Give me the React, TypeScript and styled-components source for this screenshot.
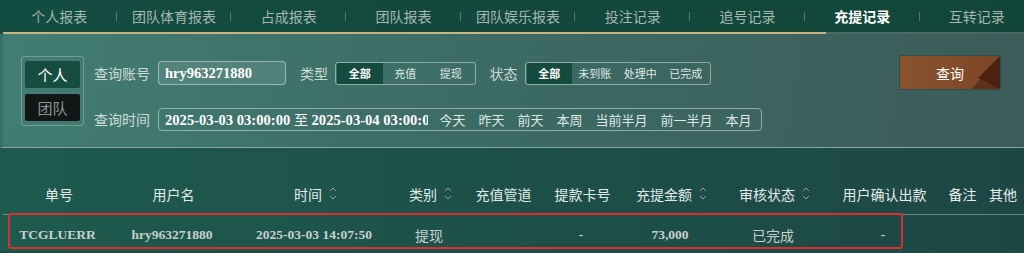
import React from "react";
import styled, { createGlobalStyle } from "styled-components";

const GlobalStyle = createGlobalStyle`
  body {
    margin: 0;
    background: #1d4d46;
    font-family: "Noto Sans CJK SC", "Noto Sans", sans-serif;
  }
`;

const tabs = [
  "个人报表",
  "团队体育报表",
  "占成报表",
  "团队报表",
  "团队娱乐报表",
  "投注记录",
  "追号记录",
  "充提记录",
  "互转记录",
];

const columns = [
  { title: "单号", width: 115 },
  { title: "用户名", width: 114 },
  { title: "时间", width: 170, sort: true },
  { title: "类别", width: 60, sort: true },
  { title: "充值管道", width: 86 },
  { title: "提款卡号", width: 72 },
  { title: "充提金额", width: 106, sort: true },
  { title: "审核状态", width: 100, sort: true },
  { title: "用户确认出款", width: 120 },
  { title: "备注", width: 36 },
  { title: "其他", width: 45 },
];

// cjk: true for cells in Chinese, shown in regular weight
const row = [
  { v: "TCGLUERR" },
  { v: "hry963271880" },
  { v: "2025-03-03 14:07:50" },
  { v: "提现", cjk: true },
  { v: "" },
  { v: "-" },
  { v: "73,000" },
  { v: "已完成", cjk: true },
  { v: "-" },
  { v: "" },
  { v: "" },
];

const gridCols = columns.map((c) => `${c.width}px`).join(" ");

const SortIcon = () => (
  <svg width="8" height="15" viewBox="0 0 8 15" fill="none">
    <path d="M1 5 L4 2 L7 5" stroke="#8fa59f" strokeWidth="1" />
    <path d="M1 10 L4 13 L7 10" stroke="#8fa59f" strokeWidth="1" />
  </svg>
);

export default function App() {
  return (
    <Page>
      <GlobalStyle />
      <Nav>
        {tabs.map((t, i) => (
          <Tab key={t} active={t === "充提记录"} last={i === tabs.length - 1}>
            {t}
          </Tab>
        ))}
      </Nav>
      <NavLine />

      <Panel>
        <ToggleBox>
          <ToggleBtn active>个人</ToggleBtn>
          <ToggleBtn>团队</ToggleBtn>
        </ToggleBox>

        <Form>
          <FormRow>
            <Label>查询账号</Label>
            <TextBox>hry963271880</TextBox>
            <Label spaced>类型</Label>
            <Segment>
              <SegItem active>全部</SegItem>
              <SegItem>充值</SegItem>
              <SegItem>提现</SegItem>
            </Segment>
            <Label spaced>状态</Label>
            <Segment>
              <SegItem active>全部</SegItem>
              <SegItem>未到账</SegItem>
              <SegItem>处理中</SegItem>
              <SegItem>已完成</SegItem>
            </Segment>
          </FormRow>
          <FormRow>
            <Label>查询时间</Label>
            <DateBox>
              <DateText>
                2025-03-03 03:00:00 <To>至</To> 2025-03-04 03:00:00
              </DateText>
              {["今天", "昨天", "前天", "本周", "当前半月", "前一半月", "本月"].map(
                (q) => (
                  <Quick key={q}>{q}</Quick>
                )
              )}
            </DateBox>
          </FormRow>
        </Form>

        <SearchButton>
          <Corner viewBox="0 0 100 33" preserveAspectRatio="none">
            <polygon points="100,0 100,33 72,33" fill="#5e3118" />
            <polygon points="100,0 100,33 78,22" fill="#4a220d" />
          </Corner>
          <span>查询</span>
        </SearchButton>
      </Panel>

      <TableArea>
        <HeaderRow>
          {columns.map((c) => (
            <HeadCell key={c.title}>
              {c.title}
              {c.sort && <SortIcon />}
            </HeadCell>
          ))}
        </HeaderRow>
        <DataRow>
          {row.map((c, i) => (
            <DataCell key={i} cjk={c.cjk}>
              {c.v}
            </DataCell>
          ))}
        </DataRow>
        <Highlight />
      </TableArea>
    </Page>
  );
}

const Page = styled.div`
  width: 1024px;
  height: 253px;
  overflow: hidden;
  background: #1d4d46;
`;

const Nav = styled.div`
  display: grid;
  grid-template-columns: repeat(9, 114.7px);
  height: 32px;
  padding-left: 2px;
  background: linear-gradient(90deg, #134c40, #124638);
  overflow: hidden;
`;

const Tab = styled.div<{ active?: boolean; last?: boolean }>`
  position: relative;
  display: flex;
  align-items: center;
  justify-content: center;
  font-size: 14px;
  color: ${(p) => (p.active ? "#ffffff" : "#a4b8b1")};
  font-weight: ${(p) => (p.active ? 700 : 400)};

  &::after {
    content: "";
    display: ${(p) => (p.last ? "none" : "block")};
    position: absolute;
    right: 0;
    top: 12px;
    width: 1px;
    height: 9px;
    background: rgba(200, 215, 210, 0.35);
  }
`;

const NavLine = styled.div`
  height: 2px;
  margin-left: 3px;
  background: linear-gradient(90deg, #c8b47c 0 823px, #4b6a63 823px);
`;

const Panel = styled.div`
  display: flex;
  align-items: flex-start;
  height: 114px;
  box-sizing: border-box;
  padding: 22px 24px 0 18px;
  background: linear-gradient(100deg, #427d73 0%, #3c6a64 50%, #3c5c5a 100%);
  border-left: 3px solid #3a6d66;
  border-bottom: 1px solid #8aa6a0;
`;

const ToggleBox = styled.div`
  display: flex;
  flex-direction: column;
  gap: 6px;
  width: 63px;
  height: 70px;
  box-sizing: border-box;
  padding: 4px 3px;
  border: 1px solid rgba(200, 225, 218, 0.35);
  border-radius: 3px;
`;

const ToggleBtn = styled.div<{ active?: boolean }>`
  display: flex;
  align-items: center;
  justify-content: center;
  height: 28px;
  border-radius: 2px;
  font-size: 15px;
  background: ${(p) => (p.active ? "#174c40" : "#121616")};
  color: ${(p) => (p.active ? "#ffffff" : "#8a9592")};
`;

const Form = styled.div`
  display: flex;
  flex-direction: column;
  gap: 22px;
  margin-left: 10px;
  padding-top: 5px;
`;

const FormRow = styled.div`
  display: flex;
  align-items: center;
  height: 24px;
`;

const Label = styled.span<{ spaced?: boolean }>`
  font-size: 14px;
  color: #cddbd6;
  margin-left: ${(p) => (p.spaced ? "14px" : "0")};
  margin-right: ${(p) => (p.spaced ? "7px" : "8px")};
  white-space: nowrap;
`;

const TextBox = styled.div`
  width: 128px;
  height: 24px;
  box-sizing: border-box;
  padding: 0 6px;
  display: flex;
  align-items: center;
  border: 1px solid rgba(210, 230, 224, 0.55);
  border-radius: 4px;
  background: rgba(255, 255, 255, 0.1);
  font-family: "Liberation Serif", "Noto Sans CJK SC", serif;
  font-weight: 700;
  font-size: 14.5px;
  color: #ffffff;
`;

const Segment = styled.div`
  display: flex;
  height: 21px;
  padding: 0 1px;
  border: 1px solid rgba(210, 230, 224, 0.55);
  border-radius: 3px;
  align-items: stretch;
`;

const SegItem = styled.div<{ active?: boolean }>`
  width: 45.5px;
  display: flex;
  align-items: center;
  justify-content: center;
  font-size: 11px;
  color: ${(p) => (p.active ? "#ffffff" : "#dfe8e5")};
  font-weight: ${(p) => (p.active ? 700 : 400)};
  background: ${(p) => (p.active ? "#154b3f" : "transparent")};
`;

const DateBox = styled.div`
  display: flex;
  align-items: center;
  width: 604px;
  height: 23px;
  box-sizing: border-box;
  border: 1px solid rgba(210, 230, 224, 0.55);
  border-radius: 4px;
`;

const DateText = styled.div`
  width: 263px;
  margin: 0 5px 0 6px;
  overflow: hidden;
  white-space: nowrap;
  font-family: "Liberation Serif", "Noto Sans CJK SC", serif;
  font-weight: 700;
  font-size: 14.6px;
  color: #ffffff;
`;

const To = styled.span`
  font-family: "Noto Sans CJK SC", sans-serif;
  font-weight: 400;
  font-size: 14px;
`;

const Quick = styled.span`
  padding: 0 6.5px;
  font-size: 13px;
  color: #dfe8e5;
  white-space: nowrap;
`;

const SearchButton = styled.div`
  position: relative;
  margin-left: auto;
  width: 100px;
  height: 33px;
  display: flex;
  align-items: center;
  justify-content: center;
  background: linear-gradient(90deg, #8a532f, #7c4626);
  box-shadow: 0 0 0 1px rgba(40, 60, 55, 0.5);
  overflow: hidden;

  span {
    position: relative;
    font-size: 14px;
    color: #ffffff;
  }
`;

const Corner = styled.svg`
  position: absolute;
  inset: 0;
  width: 100%;
  height: 100%;
`;

const TableArea = styled.div`
  position: relative;
  height: 103px;
  background: linear-gradient(90deg, #1e5a4e 0%, #1d5049 50%, #1d4745 100%);
`;

const HeaderRow = styled.div`
  display: grid;
  grid-template-columns: ${gridCols};
  height: 67px;
  box-sizing: border-box;
  padding-top: 25px;
  border-bottom: 1px solid rgba(200, 215, 210, 0.45);
  margin-left: 3px;
`;

const HeadCell = styled.div`
  display: flex;
  align-items: center;
  justify-content: center;
  gap: 7px;
  font-size: 14px;
  color: #e4ebe8;
  white-space: nowrap;
  margin-left: -3px;
`;

const DataRow = styled.div`
  display: grid;
  grid-template-columns: ${gridCols};
  height: 35px;
  align-items: center;
  padding-top: 2px;
`;

const DataCell = styled.div<{ cjk?: boolean }>`
  text-align: center;
  white-space: nowrap;
  font-family: ${(p) =>
    p.cjk
      ? `"Noto Sans CJK SC", sans-serif`
      : `"Liberation Serif", "Noto Sans CJK SC", serif`};
  font-weight: ${(p) => (p.cjk ? 400 : 700)};
  font-size: ${(p) => (p.cjk ? "14px" : "13.5px")};
  color: #c6d1cc;
`;

const Highlight = styled.div`
  position: absolute;
  left: 8px;
  top: 65px;
  width: 895px;
  height: 36px;
  box-sizing: border-box;
  border: 2.5px solid #dc2e2a;
  border-radius: 3px;
  pointer-events: none;
`;
